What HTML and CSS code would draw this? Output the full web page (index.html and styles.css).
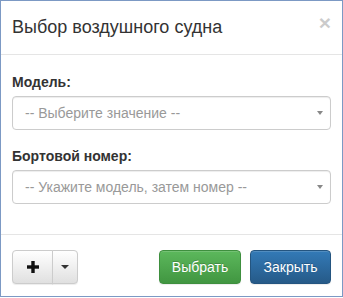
FILE: index.html
```html
<!DOCTYPE html>
<html lang="ru">
<head>
<meta charset="utf-8">
<link rel="stylesheet" href="styles.css">
</head>
<body>
<div class="modal">
  <div class="modal-header">
    <h4 class="modal-title">Выбор воздушного судна</h4>
    <span class="close">×</span>
  </div>
  <div class="modal-body">
    <div class="form-group">
      <label class="control-label">Модель:</label>
      <div class="select"><span class="placeholder">-- Выберите значение --</span><span class="arrow"></span></div>
    </div>
    <div class="form-group">
      <label class="control-label">Бортовой номер:</label>
      <div class="select"><span class="placeholder">-- Укажите модель, затем номер --</span><span class="arrow"></span></div>
    </div>
  </div>
  <div class="modal-footer">
    <div class="btn-group">
      <button class="btn btn-default btn-add"><svg width="12" height="12" viewBox="0 0 12 12"><rect x="0" y="4.3" width="12" height="3.4" fill="#111"/><rect x="4.3" y="0" width="3.4" height="12" fill="#111"/></svg></button>
      <button class="btn btn-default btn-toggle"><span class="caret"></span></button>
    </div>
    <div class="actions">
      <button class="btn btn-success">Выбрать</button>
      <button class="btn btn-primary">Закрыть</button>
    </div>
  </div>
</div>
</body>
</html>
```
FILE: styles.css
```css
html, body {
  margin: 0;
  padding: 0;
  background: #fff;
}
body {
  width: 343px;
  height: 298px;
  font-family: "Liberation Sans", Arial, sans-serif;
  font-size: 14px;
  line-height: 20px;
  color: #333;
}
.modal {
  box-sizing: border-box;
  width: 343px;
  height: 297px;
  border: 1px solid #7c99c4;
  background: #fff;
  display: flex;
  flex-direction: column;
}
.modal-header {
  display: flex;
  justify-content: space-between;
  align-items: flex-start;
  padding: 13px 11px 14px 11px;
  border-bottom: 1px solid #e5e5e5;
}
.modal-title {
  margin: 0;
  font-size: 18px;
  font-weight: normal;
  line-height: 26px;
  color: #333;
}
.close {
  font-size: 21px;
  font-weight: bold;
  line-height: 1;
  color: #000;
  opacity: 0.2;
  margin-top: -2px;
  text-shadow: 0 1px 0 #fff;
}
.modal-body {
  padding: 17px 11px 30px 11px;
  display: flex;
  flex-direction: column;
  gap: 16px;
}
.control-label {
  display: block;
  font-weight: bold;
  margin-bottom: 4px;
}
.select {
  box-sizing: border-box;
  height: 34px;
  border: 1px solid #ccc;
  border-radius: 4px;
  box-shadow: inset 0 1px 1px rgba(0,0,0,.075);
  display: flex;
  align-items: center;
  justify-content: space-between;
  padding: 0 7px 0 12px;
}
.placeholder {
  color: #999;
}
.arrow {
  width: 0;
  height: 0;
  border-left: 3px solid transparent;
  border-right: 3px solid transparent;
  border-top: 4px solid #888;
}
.modal-footer {
  border-top: 1px solid #e5e5e5;
  padding: 15px 11px 12px 11px;
  display: flex;
  justify-content: space-between;
  align-items: center;
}
.btn-group {
  display: flex;
}
.actions {
  display: flex;
  gap: 9px;
}
.btn {
  box-sizing: border-box;
  height: 34px;
  margin: 0;
  padding: 0 12px;
  font-family: "Liberation Sans", Arial, sans-serif;
  font-size: 14px;
  line-height: 20px;
  border: 1px solid transparent;
  border-radius: 4px;
  display: flex;
  align-items: center;
  justify-content: center;
  box-shadow: inset 0 1px 0 rgba(255,255,255,.15), 0 1px 1px rgba(0,0,0,.075);
}
.btn-default {
  background-image: linear-gradient(#fff 0, #e0e0e0 100%);
  border-color: #ccc;
  color: #333;
}
.btn-add {
  width: 41px;
  padding: 0;
  border-top-right-radius: 0;
  border-bottom-right-radius: 0;
}
.btn-toggle {
  width: 26px;
  padding: 0;
  margin-left: -1px;
  border-top-left-radius: 0;
  border-bottom-left-radius: 0;
}
.caret {
  width: 0;
  height: 0;
  border-left: 4px solid transparent;
  border-right: 4px solid transparent;
  border-top: 4px solid #333;
}
.btn-success {
  width: 82px;
  color: #fff;
  text-shadow: 0 -1px 0 rgba(0,0,0,.2);
  background-image: linear-gradient(#5cb85c 0, #419641 100%);
  border-color: #3e8f3e;
}
.btn-primary {
  width: 81px;
  color: #fff;
  text-shadow: 0 -1px 0 rgba(0,0,0,.2);
  background-image: linear-gradient(#337ab7 0, #265a88 100%);
  border-color: #245580;
}
```
